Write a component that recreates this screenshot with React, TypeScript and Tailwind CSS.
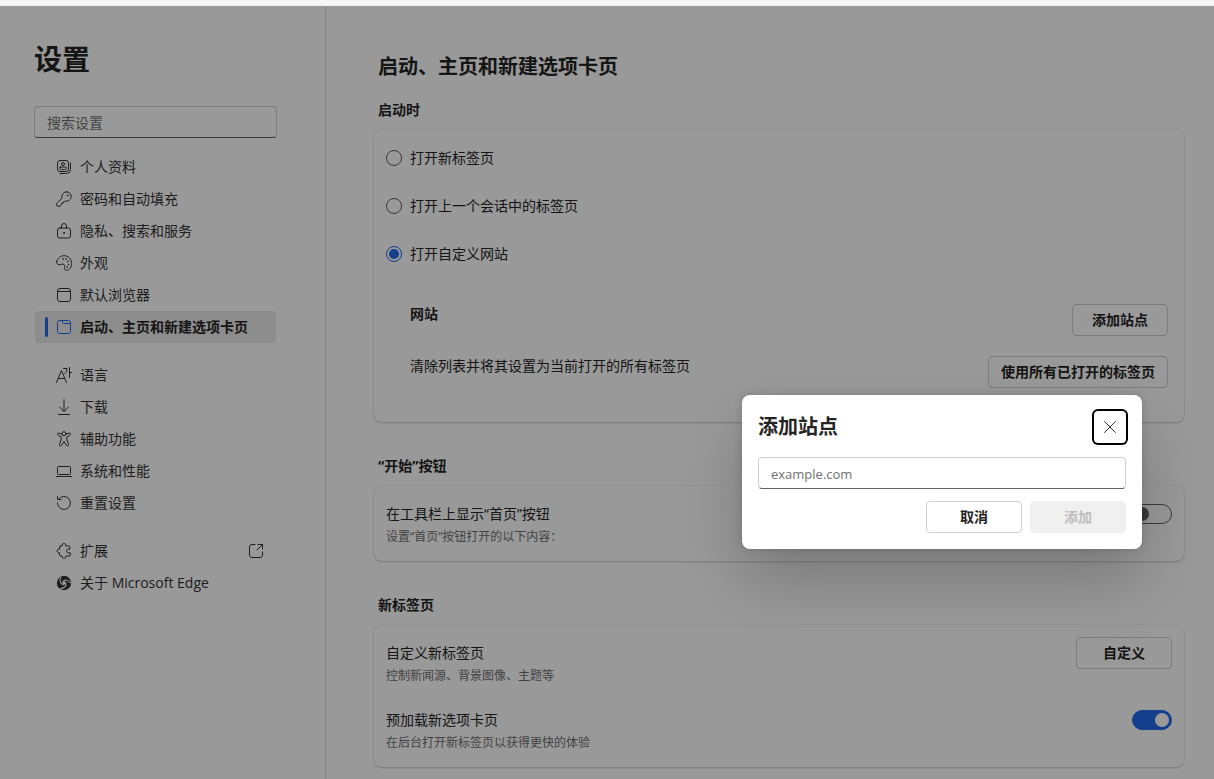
import { useState } from 'react';
import type { ReactNode } from 'react';
import clsx from 'clsx';

function Icon({ children, className }: { children: ReactNode; className?: string }) {
  return (
    <svg
      viewBox="0 0 16 16"
      className={clsx('size-4 shrink-0', className)}
      fill="none"
      stroke="currentColor"
      strokeWidth="1"
      strokeLinecap="round"
      strokeLinejoin="round"
      aria-hidden="true"
    >
      {children}
    </svg>
  );
}

const icons = {
  profile: (
    <Icon>
      <rect x="1.5" y="1.5" width="11" height="11" rx="2.5" />
      <circle cx="7" cy="5" r="1.5" />
      <path d="M4.500 8h5a1 1 0 0 1 1 1c0 1-1.400 1.700-3.500 1.700S3.500 10 3.500 9a1 1 0 0 1 1-1z" />
      <path d="M14.500 4v6.500a4 4 0 0 1-4 4H4" />
    </Icon>
  ),
  key: (
    <Icon>
      <path d="M10.500.8a4.700 4.700 0 1 1-1.300 9.200L8.200 11H7v1.300H5.500v1.200l-1.300 1.700H1.500a.8.8 0 0 1-.8-.8v-2l5.400-5.300A4.700 4.700 0 0 1 10.500.8z" />
      <circle cx="11.500" cy="4.500" r=".4" fill="currentColor" />
    </Icon>
  ),
  lock: (
    <Icon>
      <rect x="1.5" y="5" width="13" height="10" rx="2" />
      <path d="M5.500 5V3a2.500 2.500 0 0 1 5 0v2" />
      <circle cx="8" cy="10" r=".5" fill="currentColor" />
    </Icon>
  ),
  palette: (
    <Icon>
      <path d="M.7 6.500C1.600 3 4.600.7 8.300.7c4 0 7.200 3.200 7.200 7.600 0 4-2 7-4.700 7-1.900 0-2.600-1.200-2.300-2.800.3-1.700.2-3.300-1.600-3.500-1.500-.1-2.300 1-3.800.7C1.300 9.400.3 8.200.7 6.500z" />
      <g fill="currentColor" strokeWidth=".5">
        <circle cx="7" cy="4" r=".5" />
        <circle cx="10" cy="4" r=".5" />
        <circle cx="12" cy="6.300" r=".5" />
        <circle cx="12.300" cy="9.300" r=".5" />
        <circle cx="11" cy="12" r=".5" />
      </g>
    </Icon>
  ),
  browser: (
    <Icon>
      <rect x="1.5" y="1.5" width="13" height="13" rx="2.5" />
      <path d="M1.500 4.500h13" />
    </Icon>
  ),
  tab: (
    <Icon>
      <rect x="1.5" y="1.5" width="13" height="13" rx="2" />
      <path d="M6.500 1.500v2a1 1 0 0 0 1 1h7" />
    </Icon>
  ),
  language: (
    <Icon>
      <path d="M.5 15.500 5.500 3.500l5 12M2.300 11.500h6.400M7.500 1.500h3.500c0 2-.6 3.700-2 5M13.500.5v10M13.500 5.500h2" />
    </Icon>
  ),
  download: (
    <Icon>
      <path d="M8 .7v11.800M3.500 8 8 12.500 12.500 8M2.500 15.500h11" />
    </Icon>
  ),
  accessibility: (
    <Icon>
      <circle cx="8" cy="2.700" r="2" />
      <path d="M6 3.200 3 2.100c-1.600-.5-2.200 1.500-.8 2.200l3 1.700v2.800l-1.700 4.600c-.5 1.600 1.500 2.400 2.200.9L8 10.500l2.300 3.800c.7 1.500 2.700.7 2.200-.9l-1.700-4.600V6l3-1.700c1.400-.7.800-2.700-.8-2.200l-3 1.100" />
    </Icon>
  ),
  laptop: (
    <Icon>
      <rect x="1.5" y="3.5" width="13" height="8" rx="1" />
      <path d="M.5 13.500h15" />
    </Icon>
  ),
  reset: (
    <Icon>
      <path d="M2.500 4.500A6.500 6.500 0 1 1 1.500 8M1.500 1.500v3h3.500" />
    </Icon>
  ),
  puzzle: (
    <Icon>
      <path d="M5 3h1.200a1.900 1.900 0 1 1 3.600 0h3a1 1 0 0 1 1 1v2.200h-.7a1.900 1.900 0 1 0 0 3.600h1.200V12a1 1 0 0 1-1 1H9.800a1.900 1.900 0 1 1-3.600 0H4.600a1 1 0 0 1-1-1V9.800a1.900 1.900 0 1 1 0-3.600V4a1 1 0 0 1 1-1z" />
    </Icon>
  ),
  edge: (
    <svg viewBox="0 0 16 16" className="size-4 shrink-0" fill="currentColor" aria-hidden="true">
      <circle cx="8" cy="8" r="7.200" />
      <circle className="fill-white" cx="8" cy="8" r="1.700" />
      <g className="stroke-white" fill="none" strokeWidth="1.100" strokeLinecap="round">
        <path d="M6.800 6.800C8.500 4.400 12 4.500 14.500 8" />
        <path d="M6.800 6.800C8.500 4.400 12 4.500 14.500 8" transform="rotate(120 8 8)" />
        <path d="M6.800 6.800C8.500 4.400 12 4.500 14.500 8" transform="rotate(240 8 8)" />
      </g>
    </svg>
  ),
};

const groups = [
  [
    { icon: icons.profile, label: '个人资料' },
    { icon: icons.key, label: '密码和自动填充' },
    { icon: icons.lock, label: '隐私、搜索和服务' },
    { icon: icons.palette, label: '外观' },
    { icon: icons.browser, label: '默认浏览器' },
    { icon: icons.tab, label: '启动、主页和新建选项卡页', active: true },
  ],
  [
    { icon: icons.language, label: '语言' },
    { icon: icons.download, label: '下载' },
    { icon: icons.accessibility, label: '辅助功能' },
    { icon: icons.laptop, label: '系统和性能' },
    { icon: icons.reset, label: '重置设置' },
  ],
  [
    { icon: icons.puzzle, label: '扩展', external: true },
    { icon: icons.edge, label: '关于 Microsoft Edge' },
  ],
];

const startupOptions = ['打开新标签页', '打开上一个会话中的标签页', '打开自定义网站'];

const inputClass =
  'h-8 w-full rounded border border-[#d1d1d1] border-b-[#616161] bg-white px-3 text-sm placeholder:text-[#707070] outline-none';

function Button({ children, disabled }: { children: ReactNode; disabled?: boolean }) {
  return (
    <button
      type="button"
      disabled={disabled}
      className="h-8 min-w-24 shrink-0 rounded border border-[#d1d1d1] bg-white px-3 text-sm font-bold disabled:border-[#f0f0f0] disabled:bg-[#f0f0f0] disabled:text-[#bdbdbd]"
    >
      {children}
    </button>
  );
}

function Switch({ label, defaultChecked }: { label: string; defaultChecked?: boolean }) {
  return (
    <input
      type="checkbox"
      role="switch"
      aria-label={label}
      defaultChecked={defaultChecked}
      className="flex h-5 w-10 appearance-none items-center rounded-full border border-[#616161] px-[2px] before:size-[14px] before:rounded-full before:bg-[#616161] checked:justify-end checked:border-[#2169eb] checked:bg-[#2169eb] checked:before:bg-white"
    />
  );
}

function Section({ title, children }: { title: string; children: ReactNode }) {
  return (
    <section>
      <h3 className="mb-[10px] px-1 text-sm font-bold">{title}</h3>
      <div className="rounded-lg bg-white py-1 shadow-[0_0_2px_rgba(0,0,0,0.12),0_1px_2px_rgba(0,0,0,0.18)]">
        {children}
      </div>
    </section>
  );
}

function SettingRow({ title, detail, children }: { title: string; detail: string; children: ReactNode }) {
  return (
    <div className="flex items-start justify-between px-3 pt-[14px] pb-3">
      <div>
        <p className="text-sm">{title}</p>
        <p className="mt-[5px] text-xs text-[#707070]">{detail}</p>
      </div>
      <div className="flex h-5 items-center">{children}</div>
    </div>
  );
}

function Sidebar() {
  return (
    <aside className="w-[326px] shrink-0 border-r border-[#d6d6d6] pr-12 pl-[34px]">
      <h1 className="mt-[35px] text-[28px] leading-9 font-bold">设置</h1>
      <input type="search" aria-label="搜索设置" placeholder="搜索设置" className={clsx(inputClass, 'mt-[29px]')} />
      <nav className="mt-[13px] flex flex-col gap-4 px-px">
        {groups.map((items, i) => (
          <ul key={i}>
            {items.map((item) => (
              <li key={item.label}>
                <a
                  href="#"
                  className={clsx(
                    'relative flex h-8 items-center gap-2 rounded pr-3 pl-[21px] text-sm',
                    item.active ? 'bg-[#ebebeb] font-bold' : 'text-[#333333]',
                  )}
                >
                  {item.active && <span className="absolute left-[10px] h-5 w-[3px] rounded-full bg-[#2169eb]" />}
                  <span className={item.active ? 'text-[#2169eb]' : ''}>{item.icon}</span>
                  <span className="grow whitespace-nowrap">{item.label}</span>
                  {item.external && (
                    <Icon>
                      <path d="M7 1.500H4A2.500 2.500 0 0 0 1.500 4v8A2.500 2.500 0 0 0 4 14.500h8a2.500 2.500 0 0 0 2.500-2.500V9M10 1.500h4.500V6M14.500 1.500 9 7" />
                    </Icon>
                  )}
                </a>
              </li>
            ))}
          </ul>
        ))}
      </nav>
    </aside>
  );
}

function AddSiteDialog() {
  return (
    <div
      role="dialog"
      aria-labelledby="dialog-title"
      className="absolute top-[389px] right-[72px] w-[400px] rounded-lg bg-white p-4 shadow-[0_32px_64px_rgba(0,0,0,0.2),0_0_8px_rgba(0,0,0,0.16)]"
    >
      <div className="flex h-8 items-center justify-between">
        <h2 id="dialog-title" className="text-xl font-bold">添加站点</h2>
        <button
          type="button"
          aria-label="关闭"
          className="flex size-8 items-center justify-center rounded ring-2 ring-black"
        >
          <Icon className="text-[#333333]">
            <path d="m2.500 2.500 11 11M13.500 2.500l-11 11" />
          </Icon>
        </button>
      </div>
      <input
        type="url"
        aria-label="网站"
        placeholder="example.com"
        className={clsx(inputClass, 'mt-[14px] block placeholder:text-[13px]')}
      />
      <div className="mt-3 flex justify-end gap-2">
        <Button>取消</Button>
        <Button disabled>添加</Button>
      </div>
    </div>
  );
}

export default function App() {
  const [startup, setStartup] = useState(2);

  return (
    <div className="flex min-h-screen flex-col bg-white font-['Open_Sans','Noto_Sans_CJK_SC',sans-serif] text-[#242424]">
      <div className="h-[6px] border-b border-[#f0f0f0] bg-[#f7f7f7]" />
      <div className="relative flex grow">
        <Sidebar />
        <main className="grow pr-[30px] pl-12">
          <h2 className="mt-[47px] mb-[19px] px-1 text-xl font-bold">启动、主页和新建选项卡页</h2>
          <div className="flex flex-col gap-[34px]">
            <Section title="启动时">
              {startupOptions.map((option, i) => (
                <label key={option} className="flex h-12 items-center gap-2 px-3 text-sm">
                  <input
                    type="radio"
                    name="startup"
                    checked={startup === i}
                    onChange={() => setStartup(i)}
                    className="flex size-4 appearance-none items-center justify-center rounded-full border border-[#616161] checked:border-[#2169eb] checked:before:size-[10px] checked:before:rounded-full checked:before:bg-[#2169eb]"
                  />
                  {option}
                </label>
              ))}
              <div className="flex flex-col gap-5 pt-[26px] pr-4 pb-[30px] pl-9 text-sm">
                <div className="flex items-start justify-between">
                  <h4 className="font-bold">网站</h4>
                  <Button>添加站点</Button>
                </div>
                <div className="flex items-start justify-between">
                  <p>清除列表并将其设置为当前打开的所有标签页</p>
                  <Button>使用所有已打开的标签页</Button>
                </div>
              </div>
            </Section>
            <Section title="“开始”按钮">
              <SettingRow title="在工具栏上显示“首页”按钮" detail="设置“首页”按钮打开的以下内容：">
                <Switch label="在工具栏上显示“首页”按钮" />
              </SettingRow>
            </Section>
            <Section title="新标签页">
              <SettingRow title="自定义新标签页" detail="控制新闻源、背景图像、主题等">
                <Button>自定义</Button>
              </SettingRow>
              <SettingRow title="预加载新选项卡页" detail="在后台打开新标签页以获得更快的体验">
                <Switch label="预加载新选项卡页" defaultChecked />
              </SettingRow>
            </Section>
          </div>
        </main>
        <div className="absolute inset-0 bg-black/40">
          <AddSiteDialog />
        </div>
      </div>
    </div>
  );
}
